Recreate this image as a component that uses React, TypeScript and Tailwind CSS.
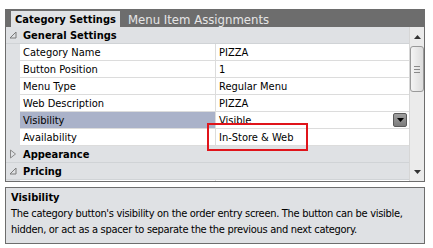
import React from "react";

const Expanded = () => (
  <svg width="8" height="8" viewBox="0 0 8 8" className="block">
    <path d="M7 1 L7 7 L1 7 Z" fill="none" stroke="#7a7a7a" strokeWidth="1" />
  </svg>
);
const Collapsed = () => (
  <svg width="8" height="10" viewBox="0 0 8 10" className="block">
    <path d="M1.5 1 L6.5 5 L1.5 9 Z" fill="none" stroke="#8a8a8a" strokeWidth="1" />
  </svg>
);

function Section({ label, open }: { label: string; open: boolean }) {
  return (
    <div className="flex shrink-0 h-[17px] bg-[#dfe1e4] border-b border-[#d0d3d6] items-center">
      <div className="w-[14px] flex justify-center items-center">{open ? <Expanded /> : <Collapsed />}</div>
      <div className="pl-[3px] font-bold text-[11px] text-black leading-none">{label}</div>
    </div>
  );
}

function Row({ name, value, selected, dropdown }: { name: string; value: string; selected?: boolean; dropdown?: boolean }) {
  return (
    <div className="flex shrink-0 h-[17px]">
      <div className="w-[14px] bg-[#dfe1e4]" />
      <div
        className={
          "w-[196px] border-b border-r border-[#dcdcdc] pl-[3px] flex items-center text-[11px] leading-none " +
          (selected ? "bg-[#aab2c9] text-black" : "bg-white text-black")
        }
      >
        {name}
      </div>
      <div className="flex-1 border-b border-[#dcdcdc] bg-white pl-[3px] flex items-center text-[11px] leading-none relative">
        {value}
        {dropdown && (
          <div className="absolute right-[2px] top-[1px] w-[14px] h-[14px] rounded-[2px] border border-[#5a5a5a] bg-gradient-to-b from-[#a0a0a0] to-[#7c7c7c] flex items-center justify-center">
            <svg width="7" height="4" viewBox="0 0 7 4">
              <path d="M0 0 L7 0 L3.5 4 Z" fill="#000" />
            </svg>
          </div>
        )}
      </div>
    </div>
  );
}

export default function App() {
  return (
    <div
      className="w-[433px] h-[248px] bg-white pt-[9px] pl-[5px] overflow-hidden"
      style={{ fontFamily: "Tahoma, 'DejaVu Sans Condensed', 'DejaVu Sans', sans-serif" }}
    >
      <div className="w-[420px]">
        {/* Tab strip */}
        <div className="h-[18px] bg-[#6d6d6d] flex items-end pl-[6px]">
          <div className="h-[16px] w-[109px] bg-[#e1e3e6] flex items-center justify-center font-bold text-[11px] text-black leading-none whitespace-nowrap">
            Category Settings
          </div>
          <div className="h-[16px] pl-[8px] flex items-center text-[13px] text-[#e6e6e6] leading-none whitespace-nowrap">
            Menu Item Assignments
          </div>
        </div>
        {/* Property grid */}
        <div className="h-[155px] border-x border-b border-[#6d6d6d] flex overflow-hidden">
          <div className="flex-1 flex flex-col overflow-hidden">
            <Section label="General Settings" open />
            <Row name="Category Name" value="PIZZA" />
            <Row name="Button Position" value="1" />
            <Row name="Menu Type" value="Regular Menu" />
            <Row name="Web Description" value="PIZZA" />
            <Row name="Visibility" value="Visible" selected dropdown />
            <div className="relative shrink-0">
              <Row name="Availability" value="In-Store & Web" />
              <div className="absolute left-[201px] top-[-6px] w-[101px] h-[28px] border-2 border-[#e0141b]" />
            </div>
            <Section label="Appearance" open={false} />
            <Section label="Pricing" open />
            <Row name="" value="" />
          </div>
          {/* Scrollbar */}
          <div className="w-[15px] bg-[#ebebeb] border-l border-[#d6d6d6] flex flex-col items-center">
            <div className="h-[18px] flex items-center justify-center pt-[2px]">
              <svg width="7" height="4" viewBox="0 0 7 4">
                <path d="M3.5 0 L7 4 L0 4 Z" fill="#333" />
              </svg>
            </div>
            <div className="w-[14px] h-[46px] mt-[1px] rounded-[3px] border border-[#9a9a9a] bg-gradient-to-r from-[#f4f4f4] to-[#dcdcdc] flex flex-col items-center justify-center gap-[2px]">
              <div className="w-[6px] h-[1px] bg-[#8a8a8a]" />
              <div className="w-[6px] h-[1px] bg-[#8a8a8a]" />
              <div className="w-[6px] h-[1px] bg-[#8a8a8a]" />
            </div>
            <div className="flex-1" />
            <div className="h-[16px] flex items-center justify-center pb-[2px]">
              <svg width="7" height="4" viewBox="0 0 7 4">
                <path d="M0 0 L7 0 L3.5 4 Z" fill="#333" />
              </svg>
            </div>
          </div>
        </div>
        {/* Description */}
        <div className="mt-[5px] h-[57px] border border-[#6d6d6d] bg-[#dfe1e4] px-[5px] pt-[2px] text-[11px] leading-[16px] text-black">
          <div className="font-bold">Visibility</div>
          <div className="tracking-[-0.3px]">
            The category button's visibility on the order entry screen. The button can be visible, hidden, or act as a spacer to separate the the previous and next category.
          </div>
        </div>
      </div>
    </div>
  );
}
